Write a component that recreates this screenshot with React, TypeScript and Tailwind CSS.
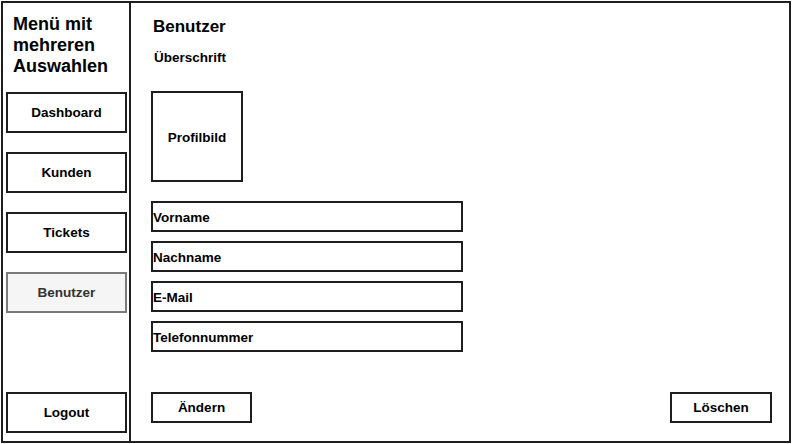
const navItems = [
  { label: "Dashboard", active: false },
  { label: "Kunden", active: false },
  { label: "Tickets", active: false },
  { label: "Benutzer", active: true }
];

const fields = ["Vorname", "Nachname", "E-Mail", "Telefonnummer"];

function NavButton({ label, active }: { label: string; active?: boolean }) {
  return (
    <button
      className={
        active
          ? "ml-[3px] flex h-[41px] w-[121px] items-center justify-center border-2 border-[#7a7a7a] bg-[#f5f5f5] pt-[1px] text-[13.5px] font-bold text-[#333]"
          : "ml-[3px] flex h-[41px] w-[121px] items-center justify-center border-2 border-[#1e1e1e] bg-white pt-[1px] text-[13.5px] font-bold text-black"
      }
      type="button"
    >
      {label}
    </button>
  );
}

export default function App() {
  return (
    <div
      className="h-[444px] w-[792px] overflow-hidden bg-white pl-[1px] pt-[1px] text-black"
      style={{ fontFamily: '"Liberation Sans", Arial, sans-serif' }}
    >
      <div className="flex h-[442px]">
        <aside className="flex h-full w-[130px] flex-col border-2 border-[#1e1e1e]">
          <h1 className="ml-[10px] mt-[11px] text-[18px] font-bold leading-[21px]">
            Menü mit
            <br />
            mehreren
            <br />
            Auswahlen
          </h1>
          <nav className="mt-[15px] flex flex-col gap-[19px]">
            {navItems.map((item) => (
              <NavButton key={item.label} label={item.label} active={item.active} />
            ))}
          </nav>
          <div className="mb-[8px] mt-auto">
            <NavButton label="Logout" />
          </div>
        </aside>

        <main className="flex h-full w-[660px] flex-col border-2 border-l-0 border-[#1e1e1e] pl-[20px]">
          <h2 className="ml-[2px] mt-[14px] text-[17px] font-bold leading-[20px]">Benutzer</h2>
          <div className="ml-[3px] mt-[13px] text-[13.5px] font-bold leading-[16px]">Überschrift</div>

          <div className="mt-[25px] flex h-[91px] w-[92px] items-center justify-center border-2 border-[#1e1e1e] pt-[3px] text-[13.5px] font-bold">
            Profilbild
          </div>

          <div className="mt-[19px] flex flex-col gap-[9px]">
            {fields.map((field) => (
              <div
                className="flex h-[31px] w-[312px] items-center border-2 border-[#1e1e1e] pt-[3px] text-[13.5px] font-bold"
                key={field}
              >
                {field}
              </div>
            ))}
          </div>

          <div className="mb-[18px] mr-[17px] mt-auto flex items-center justify-between">
            <button
              className="flex h-[31px] w-[101px] items-center justify-center border-2 border-[#1e1e1e] pt-[1px] text-[13.5px] font-bold"
              type="button"
            >
              Ändern
            </button>
            <button
              className="flex h-[31px] w-[102px] items-center justify-center border-2 border-[#1e1e1e] pt-[1px] text-[13.5px] font-bold"
              type="button"
            >
              Löschen
            </button>
          </div>
        </main>
      </div>
    </div>
  );
}
